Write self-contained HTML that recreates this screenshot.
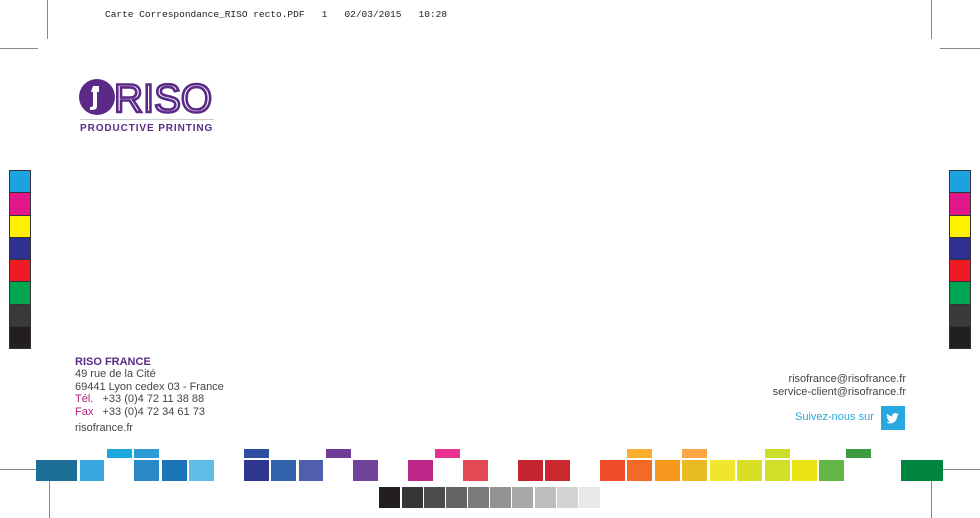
<!DOCTYPE html><html><head><meta charset="utf-8"><style>
body{margin:0;width:980px;height:518px;background:#fff;position:relative;overflow:hidden;font-family:"Liberation Sans",sans-serif}
div{position:absolute}
.l{background:#888}
.t{color:#444;font-size:11px;line-height:13px;white-space:nowrap}
.s div{position:static;box-sizing:border-box;height:22.3px;border:1px solid #333;border-bottom:0}
</style></head><body>
<div style="left:105px;top:9px;font-family:'Liberation Mono',monospace;font-size:9.5px;color:#222;white-space:pre">Carte Correspondance_RISO recto.PDF   1   02/03/2015   10:28</div>
<div class="l" style="left:47px;top:0;width:1px;height:39px"></div>
<div class="l" style="left:0;top:48px;width:38px;height:1px"></div>
<div class="l" style="left:931px;top:0;width:1px;height:39px"></div>
<div class="l" style="left:940px;top:48px;width:40px;height:1px"></div>
<div class="l" style="left:0;top:469px;width:37px;height:1px"></div>
<div class="l" style="left:49px;top:481px;width:1px;height:37px"></div>
<div class="l" style="left:943px;top:469px;width:37px;height:1px"></div>
<div class="l" style="left:931px;top:481px;width:1px;height:37px"></div>
<svg style="position:absolute;left:78px;top:78px" width="140" height="40" viewBox="0 0 140 40">
<circle cx="19" cy="19" r="18" fill="#5b2a86"/>
<path d="M15 8h6v6h-2v14q0 4-5 4h-2v-3h1q2 0 2-2V14h-2z" fill="#fff"/>
<text x="36" y="34" font-family="Liberation Sans" font-size="40" fill="none" stroke="#5b2a86" stroke-width="2.6" textLength="98" lengthAdjust="spacingAndGlyphs">RISO</text>
</svg>
<div style="left:80px;top:119px;width:134px;height:1px;background:#ccc"></div>
<div style="left:80px;top:123px;color:#5b2a86;font-weight:bold;font-size:10px;letter-spacing:0.9px;white-space:nowrap">PRODUCTIVE PRINTING</div>
<div class="s" style="left:9px;top:170px;width:22px;border-bottom:1px solid #333"><div style="background:#1aa3e0"></div><div style="background:#e4178a"></div><div style="background:#ffef00"></div><div style="background:#2e3192"></div><div style="background:#ed1c24"></div><div style="background:#00a651"></div><div style="background:#3a3a3c"></div><div style="background:#231f20"></div></div>
<div class="s" style="left:949px;top:170px;width:22px;border-bottom:1px solid #333"><div style="background:#1aa3e0"></div><div style="background:#e4178a"></div><div style="background:#ffef00"></div><div style="background:#2e3192"></div><div style="background:#ed1c24"></div><div style="background:#00a651"></div><div style="background:#3a3a3c"></div><div style="background:#231f20"></div></div>
<div class="t" style="left:75px;top:356px;color:#5b2a86;font-weight:bold">RISO FRANCE</div>
<div class="t" style="left:75px;top:368px">49 rue de la Cité</div>
<div class="t" style="left:75px;top:380.5px">69441 Lyon cedex 03 - France</div>
<div class="t" style="left:75px;top:393px"><span style="color:#b0207d">Tél.</span>&nbsp;&nbsp;&nbsp;+33 (0)4 72 11 38 88</div>
<div class="t" style="left:75px;top:405.5px"><span style="color:#b0207d">Fax</span>&nbsp;&nbsp;&nbsp;+33 (0)4 72 34 61 73</div>
<div class="t" style="left:75px;top:421.5px">risofrance.fr</div>
<div class="t" style="right:74px;top:373px;text-align:right">risofrance@risofrance.fr</div>
<div class="t" style="right:74px;top:385.5px;text-align:right">service-client@risofrance.fr</div>
<div class="t" style="left:795px;top:411px;color:#29a8d8">Suivez-nous sur</div>
<div style="left:881px;top:406px;width:24px;height:24px;background:#29a8e0"><svg width="24" height="24" viewBox="0 0 24 24"><path d="M18 8.5c-.5.2-1 .4-1.5.4.6-.3 1-.9 1.2-1.5-.5.3-1.100.5-1.700.6a2.6 2.6 0 0 0-4.5 2.4c-2.2-.1-4.1-1.2-5.4-2.8-.7 1.2-.3 2.7.8 3.5-.4 0-.8-.1-1.2-.3 0 1.3.9 2.4 2.1 2.6-.4.1-.8.1-1.2 0 .3 1 1.3 1.8 2.4 1.8A5.3 5.3 0 0 1 5 16.3c1.2.7 2.5 1.1 3.9 1.1 4.8 0 7.4-4 7.3-7.600.6-.4 1.1-.8 1.8-1.3z" fill="#fff"/></svg></div>
<div style="left:36px;top:460px;width:41px;height:21px;background:#1c6e96"></div>
<div style="left:80px;top:460px;width:24px;height:21px;background:#39a8de"></div>
<div style="left:107px;top:449px;width:25px;height:9px;background:#1aa9dc"></div>
<div style="left:134px;top:449px;width:25px;height:9px;background:#2e9ad6"></div>
<div style="left:134px;top:460px;width:25px;height:21px;background:#2a87c8"></div>
<div style="left:162px;top:460px;width:25px;height:21px;background:#1b73b8"></div>
<div style="left:189px;top:460px;width:25px;height:21px;background:#5fbde6"></div>
<div style="left:244px;top:449px;width:25px;height:9px;background:#2b4e9e"></div>
<div style="left:244px;top:460px;width:25px;height:21px;background:#2e3690"></div>
<div style="left:271px;top:460px;width:25px;height:21px;background:#3162ac"></div>
<div style="left:299px;top:460px;width:24px;height:21px;background:#4f5fab"></div>
<div style="left:326px;top:449px;width:25px;height:9px;background:#6f3d98"></div>
<div style="left:353px;top:460px;width:25px;height:21px;background:#71449c"></div>
<div style="left:408px;top:460px;width:25px;height:21px;background:#bc2788"></div>
<div style="left:435px;top:449px;width:25px;height:9px;background:#e9308e"></div>
<div style="left:463px;top:460px;width:25px;height:21px;background:#e24953"></div>
<div style="left:518px;top:460px;width:25px;height:21px;background:#c4262f"></div>
<div style="left:545px;top:460px;width:25px;height:21px;background:#c8282e"></div>
<div style="left:600px;top:460px;width:25px;height:21px;background:#f04c2a"></div>
<div style="left:627px;top:449px;width:25px;height:9px;background:#fbad30"></div>
<div style="left:627px;top:460px;width:25px;height:21px;background:#f26a25"></div>
<div style="left:655px;top:460px;width:25px;height:21px;background:#f7991f"></div>
<div style="left:682px;top:449px;width:25px;height:9px;background:#fca545"></div>
<div style="left:682px;top:460px;width:25px;height:21px;background:#e8bb25"></div>
<div style="left:710px;top:460px;width:25px;height:21px;background:#f0e62d"></div>
<div style="left:737px;top:460px;width:25px;height:21px;background:#d8df25"></div>
<div style="left:765px;top:449px;width:25px;height:9px;background:#cedd2a"></div>
<div style="left:765px;top:460px;width:25px;height:21px;background:#d3de2a"></div>
<div style="left:792px;top:460px;width:25px;height:21px;background:#ebe515"></div>
<div style="left:819px;top:460px;width:25px;height:21px;background:#62b646"></div>
<div style="left:846px;top:449px;width:25px;height:9px;background:#3d9a40"></div>
<div style="left:901px;top:460px;width:42px;height:21px;background:#008640"></div>
<div style="left:379px;top:487px;width:21px;height:21px;background:#231f20"></div>
<div style="left:402px;top:487px;width:21px;height:21px;background:#363636"></div>
<div style="left:424px;top:487px;width:21px;height:21px;background:#4b4b4b"></div>
<div style="left:446px;top:487px;width:21px;height:21px;background:#636363"></div>
<div style="left:468px;top:487px;width:21px;height:21px;background:#7b7b7b"></div>
<div style="left:490px;top:487px;width:21px;height:21px;background:#939393"></div>
<div style="left:512px;top:487px;width:21px;height:21px;background:#a9a9a9"></div>
<div style="left:535px;top:487px;width:21px;height:21px;background:#bdbdbd"></div>
<div style="left:557px;top:487px;width:21px;height:21px;background:#d3d3d3"></div>
<div style="left:579px;top:487px;width:21px;height:21px;background:#e9e9e9"></div>
</body></html>
